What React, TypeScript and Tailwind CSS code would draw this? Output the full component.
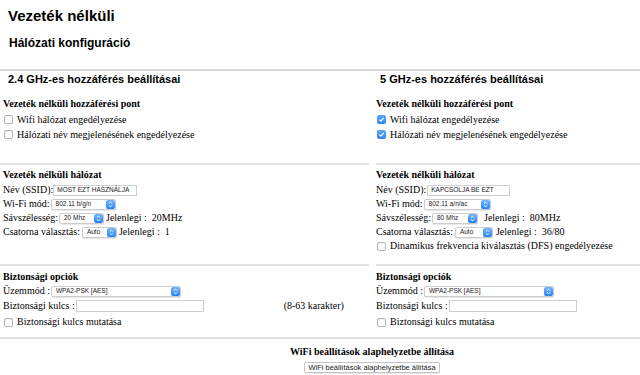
import React from "react";

const sans = "font-['Liberation_Sans',Arial,sans-serif]";
const serif = "font-['Liberation_Serif','Times_New_Roman',serif]";

function Stepper() {
  return (
    <span className="w-[9px] h-[9px] rounded-[2px] bg-linear-to-b from-[#72b6ff] to-[#1f80f5] flex items-center justify-center shrink-0">
      <svg width="9" height="9" viewBox="0 0 9 9">
        <path d="M2.9 3.7 L4.5 2.1 L6.1 3.7" stroke="white" strokeWidth="1" fill="none" />
        <path d="M2.9 5.3 L4.5 6.9 L6.1 5.3" stroke="white" strokeWidth="1" fill="none" />
      </svg>
    </span>
  );
}

function Select({ cls, text }: { cls: string; text: string }) {
  return (
    <span
      className={`${cls} h-[11px] inline-flex items-center justify-between rounded-[2px] border border-[#cdcdcd] bg-white shadow-[0_1px_1px_rgba(0,0,0,0.1)] pl-[4px]`}
    >
      <span className={`${sans} text-[6.5px] leading-none text-[#222] whitespace-nowrap`}>{text}</span>
      <Stepper />
    </span>
  );
}

function Input({ cls, text }: { cls: string; text?: string }) {
  return (
    <span className={`${cls} inline-flex items-center border border-[#cfcfcf] bg-white pl-[3px]`}>
      <span className={`${sans} text-[6.5px] leading-none text-[#222] whitespace-nowrap`}>{text}</span>
    </span>
  );
}

function Cb({ checked }: { checked?: boolean }) {
  if (checked) {
    return (
      <span className="w-[9px] h-[9px] rounded-[2px] bg-linear-to-b from-[#5aa8fb] to-[#2a86f3] flex items-center justify-center shrink-0">
        <svg width="9" height="9" viewBox="0 0 9 9">
          <path d="M2.3 4.6 L3.9 6.1 L6.7 2.9" stroke="white" strokeWidth="1.2" fill="none" />
        </svg>
      </span>
    );
  }
  return (
    <span className="w-[9px] h-[9px] rounded-[2px] border border-[#b4b4b4] bg-white shadow-[inset_0_1px_1px_rgba(0,0,0,0.06)] shrink-0" />
  );
}

function CbRow({ checked, text, h }: { checked?: boolean; text: string; h: string }) {
  return (
    <div className={`${h} flex items-center pl-[1px]`}>
      <Cb checked={checked} />
      <span className="ml-[4px] whitespace-nowrap">{text}</span>
    </div>
  );
}

function Column({
  ghz,
  checked,
  ssid,
  mode,
  modeW,
  bwW,
  chW,
  bw,
  bwCur,
  ch,
  chCur,
  right,
}: {
  ghz: string;
  checked: boolean;
  ssid: string;
  mode: string;
  modeW: string;
  bwW: string;
  chW: string;
  bw: string;
  bwCur: string;
  ch: string;
  chCur: string;
  right?: boolean;
}) {
  return (
    <div className={`${serif} text-[10px] leading-[12px] text-black`}>
      <div className="h-[92px] pt-[1px]">
        <div className={`${sans} ${right ? "pl-[4px]" : "pl-[8px]"} text-[11px] leading-[14px] font-bold`}>
          {ghz}
        </div>
        <div className={`${right ? "pl-0" : "pl-[3px]"}`}>
          <div className="mt-[12px] font-bold leading-[12px]">Vezeték nélküli hozzáférési pont</div>
          <div className="mt-[2px]">
            <CbRow h="h-[15px]" checked={checked} text="Wifi hálózat engedélyezése" />
            <CbRow h="h-[15px]" checked={checked} text="Hálózati név megjelenésének engedélyezése" />
          </div>
        </div>
      </div>
      <div className={`h-[101px] border-t-2 border-[#e3e3e3] pt-[4px] ${right ? "pl-0" : "pl-[3px]"}`}>
        <div className="font-bold leading-[12px]">Vezeték nélküli hálózat</div>
        <div className="mt-[2px]">
          <div className="h-[14px] flex items-center whitespace-nowrap">
            <span>Név (SSID):</span>
            <Input cls={right ? "w-[83px] h-[11px] ml-[1px]" : "w-[84px] h-[11px]"} text={ssid} />
          </div>
          <div className="h-[14px] flex items-center whitespace-nowrap">
            <span>Wi-Fi mód:</span>
            <span className="ml-[1px] flex">
              <Select cls={modeW} text={mode} />
            </span>
          </div>
          <div className="h-[14px] flex items-center whitespace-nowrap">
            <span>Sávszélesség:</span>
            <span className="ml-[1px] flex">
              <Select cls={bwW} text={bw} />
            </span>
            <span className={right ? "ml-[6px]" : "ml-[2px]"}>Jelenlegi :&nbsp; {bwCur}</span>
          </div>
          <div className="h-[14px] flex items-center whitespace-nowrap">
            <span>Csatorna választás:</span>
            <span className="ml-[2px] flex">
              <Select cls={chW} text={ch} />
            </span>
            <span className={right ? "ml-[3px]" : "ml-[2px]"}>Jelenlegi :&nbsp; {chCur}</span>
          </div>
          {right && <CbRow h="h-[14px]" text="Dinamikus frekvencia kiválasztás (DFS) engedélyezése" />}
        </div>
      </div>
      <div className={`h-[73px] border-t-2 border-[#e3e3e3] pt-[5px] ${right ? "pl-0" : "pl-[3px]"}`}>
        <div className="font-bold leading-[12px]">Biztonsági opciók</div>
        <div className="mt-[1px] h-[14px] flex items-center whitespace-nowrap">
          <span>Üzemmód :</span>
          <span className="ml-[1px] flex">
            <Select cls="w-[130px]" text="WPA2-PSK [AES]" />
          </span>
        </div>
        <div className="h-[16px] flex items-center whitespace-nowrap">
          <span>Biztonsági kulcs :</span>
          <Input cls="w-[128px] h-[12px] ml-[1px]" />
          {!right && <span className="ml-[80px]">(8-63 karakter)</span>}
        </div>
        <CbRow h="mt-[1px] h-[14px]" text="Biztonsági kulcs mutatása" />
      </div>
    </div>
  );
}

export default function App() {
  return (
    <div className="w-[640px] h-[375px] bg-white overflow-hidden text-black">
      <div className="h-[69px] pl-[8px]">
        <div className={`${sans} pt-[7px] text-[15px] leading-[17px] font-bold`}>Vezeték nélküli</div>
        <div className={`${sans} mt-[12px] pl-[1px] text-[12px] leading-[14px] font-bold`}>
          Hálózati konfiguráció
        </div>
      </div>
      <div className="h-[2px] bg-[#d8d8d8]" />
      <div className="flex">
        <div className="w-[369px]">
          <Column
            ghz="2.4 GHz-es hozzáférés beállításai"
            checked={false}
            ssid="MOST EZT HASZNÁLJA"
            mode="802.11 b/g/n"
            modeW="w-[65px]"
            bwW="w-[45px]"
            chW="w-[35px]"
            bw="20 Mhz"
            bwCur="20MHz"
            ch="Auto"
            chCur="1"
          />
        </div>
        <div className="ml-[7px] flex-1">
          <Column
            right
            ghz="5 GHz-es hozzáférés beállításai"
            checked={true}
            ssid="KAPCSOLJA BE EZT"
            mode="802.11 a/n/ac"
            modeW="w-[67px]"
            bwW="w-[46px]"
            chW="w-[38px]"
            bw="80 Mhz"
            bwCur="80MHz"
            ch="Auto"
            chCur="36/80"
          />
        </div>
      </div>
      <div className="h-[2px] bg-[#e0e0e0]" />
      <div className="ml-[104px] w-[536px] flex flex-col items-center pt-[7px]">
        <div className={`${serif} text-[10px] leading-[12px] font-bold`}>
          WiFi beállítások alaphelyzetbe állítása
        </div>
        <button
          className={`${sans} mt-[4px] h-[11px] px-[3px] rounded-[2px] border border-[#c4c4c4] bg-white shadow-[0_1px_1px_rgba(0,0,0,0.1)] text-[7.5px] leading-none text-[#222] flex items-center`}
        >
          WiFi beállítások alaphelyzetbe állítása
        </button>
      </div>
    </div>
  );
}
